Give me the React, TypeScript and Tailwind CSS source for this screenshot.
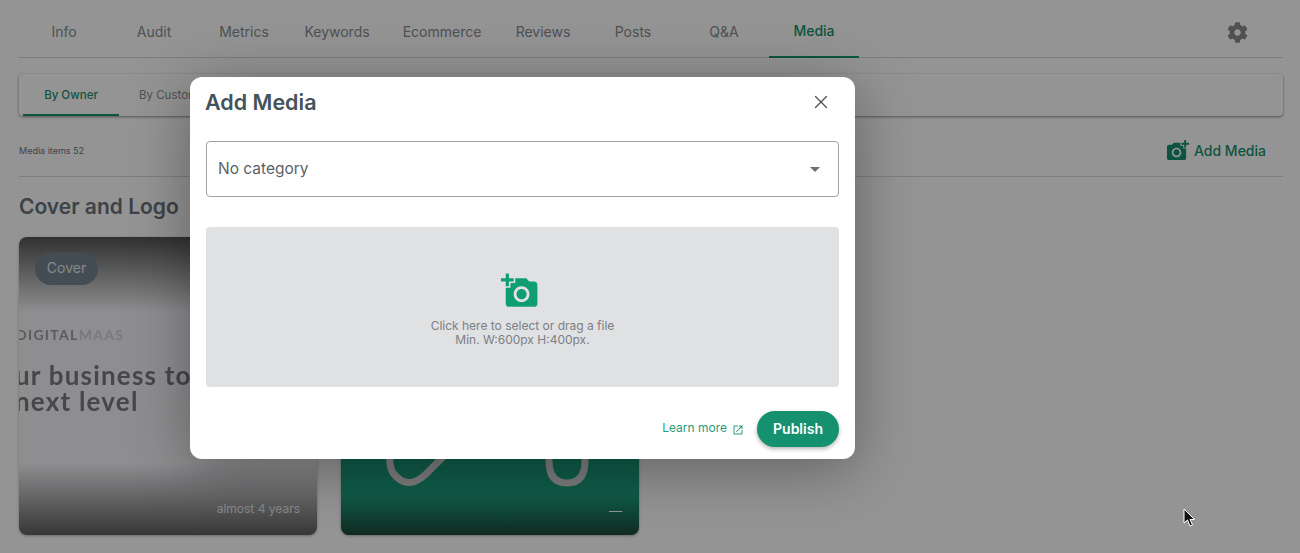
import { FaCog } from "react-icons/fa";
import { X } from "lucide-react";

const addPhoto =
  "M3 4V1h2v3h3v2H5v3H3V6H0V4h3zm3 6V7h3V4h7l1.83 2H21c1.1 0 2 .9 2 2v12c0 1.1-.9 2-2 2H5c-1.1 0-2-.9-2-2V10h3zm7 9c2.76 0 5-2.24 5-5s-2.24-5-5-5-5 2.24-5 5 2.24 5 5 5zm-3.2-5c0 1.77 1.43 3.2 3.2 3.2s3.2-1.43 3.2-3.2-1.43-3.2-3.2-3.2-3.2 1.43-3.2 3.2z";

const tabs = [
  { label: "Info", w: "w-[90px]" },
  { label: "Audit", w: "w-[90px]" },
  { label: "Metrics", w: "w-[90px]" },
  { label: "Keywords", w: "w-[96px]" },
  { label: "Ecommerce", w: "w-[114px]" },
  { label: "Reviews", w: "w-[88px]" },
  { label: "Posts", w: "w-[92px]" },
  { label: "Q&A", w: "w-[90px]" },
];

const AddPhotoIcon = ({ className }: { className: string }) => (
  <svg viewBox="0 0 24 24" className={className} fill="currentColor">
    <path d={addPhoto} />
  </svg>
);

const Page = () => (
  <div className="px-[19px] pr-[17px]">
    <div className="flex h-[58px] items-stretch border-b border-[#d8d9db]">
      {tabs.map((t) => (
        <div
          key={t.label}
          className={`${t.w} flex items-center justify-center pt-[5px] text-[14px] text-[#868c90]`}
        >
          {t.label}
        </div>
      ))}
      <div className="-mb-px flex w-[90px] items-center justify-center border-b-2 border-[#17916f] pt-[5px] text-[14px] font-medium text-[#17916f]">
        Media
      </div>
      <div className="flex flex-1 items-center justify-end pt-[8px] pr-[35px]">
        <FaCog className="h-[21px] w-[21px] text-[#888a8c]" />
      </div>
    </div>

    <div className="mt-4 flex h-[42px] items-stretch rounded bg-white shadow-[0_1px_3px_rgba(0,0,0,0.45)]">
      <div className="ml-1 flex w-[96px] items-center justify-center border-b-2 border-[#17916f] pt-[3px] text-[11.5px] font-medium text-[#17916f]">
        By Owner
      </div>
      <div className="ml-5 flex items-center pt-[2px] text-[11.5px] text-[#868c90]">By Customer</div>
    </div>

    <div className="flex h-[61px] items-center justify-between border-b border-[#d8d9db] pt-[8px]">
      <span className="mt-[2px] text-[9px] text-[#6f757a]">Media items 52</span>
      <div className="mr-[17px] flex items-center gap-[5px] text-[14px] font-medium text-[#17916f]">
        <AddPhotoIcon className="h-[23px] w-[23px] -scale-x-100" />
        Add Media
      </div>
    </div>

    <h2 className="mt-[17px] text-[21px] leading-[26px] font-semibold text-[#69737b]">Cover and Logo</h2>

    <div className="mt-[17px] flex gap-6">
      <div className="relative h-[298px] w-[298px] overflow-hidden rounded-lg bg-[#f4f5f8] shadow-[0_1px_3px_rgba(0,0,0,0.3)]">
        <div className="absolute inset-x-0 top-0 h-[75px] bg-linear-to-b from-[#555555] to-transparent" />
        <div className="absolute inset-x-0 bottom-0 h-[72px] bg-linear-to-t from-[#5f5f5f] to-transparent" />
        <div className="absolute top-[87px] -left-[3px] font-['Lato',sans-serif] text-[14px] font-bold tracking-[1.3px] whitespace-nowrap blur-[0.5px]">
          <span className="text-[#9a9da1]">DIGITAL</span>
          <span className="text-[#cfd2d6]">MAAS</span>
        </div>
        <div className="absolute top-[125px] -left-[4px] font-['Lato',sans-serif] text-[26px] leading-[26px] font-bold tracking-[1.2px] whitespace-nowrap text-[#777a7f] blur-[0.6px]">
          ur business to the
          <br />
          next level
        </div>
        <div className="absolute top-4 left-4 flex h-8 w-[63px] items-center justify-center rounded-full bg-[#788591] pb-[3px] text-[14px] text-[#e8eaec]">
          Cover
        </div>
        <div className="absolute right-[17px] bottom-[17px] text-[12px] text-[#e8e8e8]">almost 4 years</div>
      </div>

      <div className="relative h-[298px] w-[298px] overflow-hidden rounded-lg bg-[#1a9f7c] shadow-[0_1px_3px_rgba(0,0,0,0.3)]">
        <svg viewBox="0 0 298 298" className="absolute inset-0 h-full w-full" fill="none">
          <path d="M53 203 Q 45 223 52 236 Q 66 254 84 238 L 108 214" stroke="#d8d8d8" strokeWidth="7" />
          <path d="M208 203 L 208 224 Q 208 246 226 246 Q 244 246 244 224 L 244 203" stroke="#d8d8d8" strokeWidth="7" />
        </svg>
        <div className="absolute inset-x-0 bottom-0 h-[40px] bg-linear-to-t from-[#1f4a3d] to-transparent" />
        <div className="absolute right-[17px] bottom-[17px] text-[13px] leading-[13px] text-white">—</div>
      </div>
    </div>
  </div>
);

const Modal = () => (
  <div className="h-[382px] w-[665px] rounded-xl bg-white px-4 shadow-[0_10px_60px_rgba(0,0,0,0.35)]">
    <div className="flex h-[64px] items-center justify-between pb-[14px]">
      <h2 className="-ml-px text-[21.5px] font-semibold text-[#45525a]">Add Media</h2>
      <X className="mr-[7px] h-[22px] w-[22px] text-[#4b5055]" strokeWidth={1.4} />
    </div>
    <div className="flex h-14 items-center justify-between rounded border border-[#a3a3a3] pr-[18px] pb-[1px] pl-[11px] text-[15.5px] text-[#5a6268]">
      No category
      <span className="mt-[2px] h-0 w-0 border-x-[5px] border-t-[5px] border-x-transparent border-t-[#6f6f6f]" />
    </div>
    <div className="mt-[30px] flex h-40 flex-col items-center justify-center rounded bg-[#e0e1e3] pt-[5px]">
      <AddPhotoIcon className="h-[38px] w-[38px] -translate-x-[3px] -translate-y-px text-[#0f9e72]" />
      <p className="mt-[8px] text-center text-[12px] leading-[14px] text-[#7a8085]">
        Click here to select or drag a file
        <br />
        Min. W:600px H:400px.
      </p>
    </div>
    <div className="mt-6 flex items-center justify-end">
      <span className="-translate-y-px text-[12px] text-[#2b9a7c]">Learn more</span>
      <svg viewBox="0 0 24 24" className="mr-[13px] ml-[5px] h-[12px] w-[12px] translate-y-[1px] text-[#2b9a7c]" fill="currentColor">
        <path d="M19 19H5V5h7V3H5c-1.11 0-2 .9-2 2v14c0 1.1.89 2 2 2h14c1.1 0 2-.9 2-2v-7h-2v7zM14 3v2h3.59l-9.83 9.83 1.41 1.41L19 6.41V10h2V3h-7z" />
      </svg>
      <button className="h-9 w-[82px] rounded-full bg-[#169170] pb-[2px] text-[14px] font-semibold text-white shadow-[0_2px_4px_rgba(0,0,0,0.3)]">
        Publish
      </button>
    </div>
  </div>
);

export default function App() {
  return (
    <div className="relative h-[553px] w-[1300px] overflow-hidden bg-white font-['Inter',sans-serif]">
      <Page />
      <div className="absolute inset-0 bg-black/[.42]" />
      <div className="absolute top-[77px] left-[190px]">
        <Modal />
      </div>
      <svg viewBox="0 0 14 20" className="absolute top-[508px] left-[1183px] h-[20px] w-[14px]">
        <path d="M1 1 L1 15 L4.5 12 L7 18 L9.5 17 L7 11.5 L11.5 11.5 Z" fill="#111" stroke="#fff" strokeWidth="1" />
      </svg>
    </div>
  );
}
